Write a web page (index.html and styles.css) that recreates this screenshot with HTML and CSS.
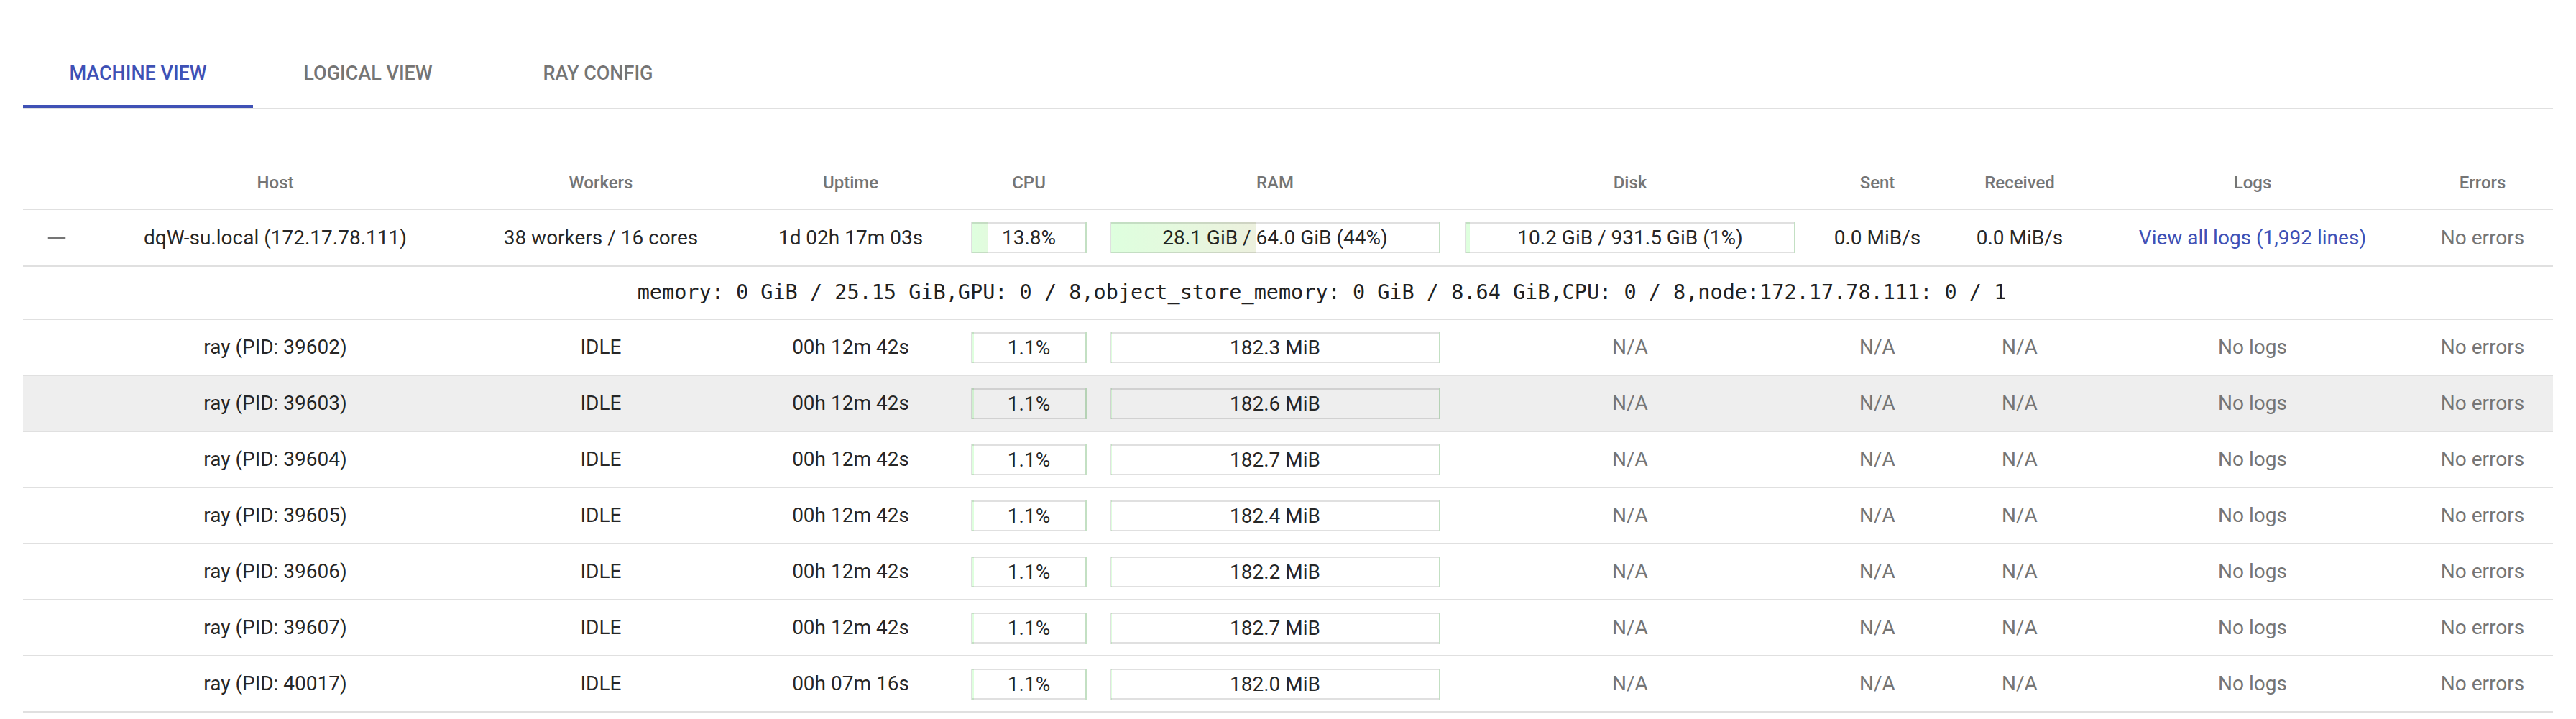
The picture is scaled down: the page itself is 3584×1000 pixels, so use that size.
FILE: index.html
```
<!DOCTYPE html>
<html>
<head>
<meta charset="utf-8">
<link rel="stylesheet" href="styles.css">
</head>
<body>
<div class="page">
  <div class="tabs">
    <div class="tab active">Machine view</div>
    <div class="tab">Logical view</div>
    <div class="tab">Ray config</div>
  </div>

  <div class="table">
    <div class="row head">
      <div class="cell"></div>
      <div class="cell">Host</div>
      <div class="cell">Workers</div>
      <div class="cell">Uptime</div>
      <div class="cell">CPU</div>
      <div class="cell">RAM</div>
      <div class="cell">Disk</div>
      <div class="cell">Sent</div>
      <div class="cell">Received</div>
      <div class="cell">Logs</div>
      <div class="cell">Errors</div>
    </div>

    <div class="row node">
      <div class="cell"><svg class="collapse" viewBox="0 0 24 24"><path d="M19 13H5v-2h14v2z"/></svg></div>
      <div class="cell">dqW-su.local (172.17.78.111)</div>
      <div class="cell">38 workers / 16 cores</div>
      <div class="cell">1d 02h 17m 03s</div>
      <div class="cell"><div class="bar cpu" style="background: linear-gradient(to right, rgba(0,255,0,0.13) 0%, rgba(35,220,0,0.13) 13.8%, transparent 13.8%)">13.8%</div></div>
      <div class="cell"><div class="bar wide" style="background: linear-gradient(to right, rgba(0,255,0,0.13) 0%, rgba(112,143,0,0.13) 44%, transparent 44%)">28.1 GiB / 64.0 GiB (44%)</div></div>
      <div class="cell"><div class="bar wide" style="background: linear-gradient(to right, rgba(0,255,0,0.13) 0%, rgba(3,252,0,0.13) 1%, transparent 1%)">10.2 GiB / 931.5 GiB (1%)</div></div>
      <div class="cell">0.0 MiB/s</div>
      <div class="cell">0.0 MiB/s</div>
      <div class="cell"><span class="link">View all logs (1,992 lines)</span></div>
      <div class="cell muted">No errors</div>
    </div>

    <div class="row res">
      <div class="cell"></div>
      <div class="cell span">memory: 0 GiB / 25.15 GiB,GPU: 0 / 8,object_store_memory: 0 GiB / 8.64 GiB,CPU: 0 / 8,node:172.17.78.111: 0 / 1</div>
    </div>

    <div class="row worker">
      <div class="cell"></div>
      <div class="cell">ray (PID: 39602)</div>
      <div class="cell">IDLE</div>
      <div class="cell">00h 12m 42s</div>
      <div class="cell"><div class="bar cpu" style="background: linear-gradient(to right, rgba(0,255,0,0.13) 0%, rgba(3,252,0,0.13) 1.1%, transparent 1.1%)">1.1%</div></div>
      <div class="cell"><div class="bar wide" style="background: linear-gradient(to right, rgba(0,255,0,0.13) 0%, rgba(1,254,0,0.13) 0.28%, transparent 0.28%)">182.3 MiB</div></div>
      <div class="cell muted">N/A</div>
      <div class="cell muted">N/A</div>
      <div class="cell muted">N/A</div>
      <div class="cell muted">No logs</div>
      <div class="cell muted">No errors</div>
    </div>

    <div class="row worker hover">
      <div class="cell"></div>
      <div class="cell">ray (PID: 39603)</div>
      <div class="cell">IDLE</div>
      <div class="cell">00h 12m 42s</div>
      <div class="cell"><div class="bar cpu" style="background: linear-gradient(to right, rgba(0,255,0,0.13) 0%, rgba(3,252,0,0.13) 1.1%, transparent 1.1%)">1.1%</div></div>
      <div class="cell"><div class="bar wide" style="background: linear-gradient(to right, rgba(0,255,0,0.13) 0%, rgba(1,254,0,0.13) 0.28%, transparent 0.28%)">182.6 MiB</div></div>
      <div class="cell muted">N/A</div>
      <div class="cell muted">N/A</div>
      <div class="cell muted">N/A</div>
      <div class="cell muted">No logs</div>
      <div class="cell muted">No errors</div>
    </div>

    <div class="row worker">
      <div class="cell"></div>
      <div class="cell">ray (PID: 39604)</div>
      <div class="cell">IDLE</div>
      <div class="cell">00h 12m 42s</div>
      <div class="cell"><div class="bar cpu" style="background: linear-gradient(to right, rgba(0,255,0,0.13) 0%, rgba(3,252,0,0.13) 1.1%, transparent 1.1%)">1.1%</div></div>
      <div class="cell"><div class="bar wide" style="background: linear-gradient(to right, rgba(0,255,0,0.13) 0%, rgba(1,254,0,0.13) 0.28%, transparent 0.28%)">182.7 MiB</div></div>
      <div class="cell muted">N/A</div>
      <div class="cell muted">N/A</div>
      <div class="cell muted">N/A</div>
      <div class="cell muted">No logs</div>
      <div class="cell muted">No errors</div>
    </div>

    <div class="row worker">
      <div class="cell"></div>
      <div class="cell">ray (PID: 39605)</div>
      <div class="cell">IDLE</div>
      <div class="cell">00h 12m 42s</div>
      <div class="cell"><div class="bar cpu" style="background: linear-gradient(to right, rgba(0,255,0,0.13) 0%, rgba(3,252,0,0.13) 1.1%, transparent 1.1%)">1.1%</div></div>
      <div class="cell"><div class="bar wide" style="background: linear-gradient(to right, rgba(0,255,0,0.13) 0%, rgba(1,254,0,0.13) 0.28%, transparent 0.28%)">182.4 MiB</div></div>
      <div class="cell muted">N/A</div>
      <div class="cell muted">N/A</div>
      <div class="cell muted">N/A</div>
      <div class="cell muted">No logs</div>
      <div class="cell muted">No errors</div>
    </div>

    <div class="row worker">
      <div class="cell"></div>
      <div class="cell">ray (PID: 39606)</div>
      <div class="cell">IDLE</div>
      <div class="cell">00h 12m 42s</div>
      <div class="cell"><div class="bar cpu" style="background: linear-gradient(to right, rgba(0,255,0,0.13) 0%, rgba(3,252,0,0.13) 1.1%, transparent 1.1%)">1.1%</div></div>
      <div class="cell"><div class="bar wide" style="background: linear-gradient(to right, rgba(0,255,0,0.13) 0%, rgba(1,254,0,0.13) 0.28%, transparent 0.28%)">182.2 MiB</div></div>
      <div class="cell muted">N/A</div>
      <div class="cell muted">N/A</div>
      <div class="cell muted">N/A</div>
      <div class="cell muted">No logs</div>
      <div class="cell muted">No errors</div>
    </div>

    <div class="row worker">
      <div class="cell"></div>
      <div class="cell">ray (PID: 39607)</div>
      <div class="cell">IDLE</div>
      <div class="cell">00h 12m 42s</div>
      <div class="cell"><div class="bar cpu" style="background: linear-gradient(to right, rgba(0,255,0,0.13) 0%, rgba(3,252,0,0.13) 1.1%, transparent 1.1%)">1.1%</div></div>
      <div class="cell"><div class="bar wide" style="background: linear-gradient(to right, rgba(0,255,0,0.13) 0%, rgba(1,254,0,0.13) 0.28%, transparent 0.28%)">182.7 MiB</div></div>
      <div class="cell muted">N/A</div>
      <div class="cell muted">N/A</div>
      <div class="cell muted">N/A</div>
      <div class="cell muted">No logs</div>
      <div class="cell muted">No errors</div>
    </div>

    <div class="row worker">
      <div class="cell"></div>
      <div class="cell">ray (PID: 40017)</div>
      <div class="cell">IDLE</div>
      <div class="cell">00h 07m 16s</div>
      <div class="cell"><div class="bar cpu" style="background: linear-gradient(to right, rgba(0,255,0,0.13) 0%, rgba(3,252,0,0.13) 1.1%, transparent 1.1%)">1.1%</div></div>
      <div class="cell"><div class="bar wide" style="background: linear-gradient(to right, rgba(0,255,0,0.13) 0%, rgba(1,254,0,0.13) 0.28%, transparent 0.28%)">182.0 MiB</div></div>
      <div class="cell muted">N/A</div>
      <div class="cell muted">N/A</div>
      <div class="cell muted">N/A</div>
      <div class="cell muted">No logs</div>
      <div class="cell muted">No errors</div>
    </div>
  </div>
</div>
</body>
</html>
```

FILE: styles.css
```
html, body {
  margin: 0;
  padding: 0;
  background: #ffffff;
}

body {
  font-family: Roboto, "Liberation Sans", sans-serif;
  color: rgba(0, 0, 0, 0.87);
  font-size: 28px;
  line-height: 40px;
}

.page {
  padding: 54px 32px 0 32px;
}

/* Tabs */
.tabs {
  display: flex;
  height: 96px;
  border-bottom: 2px solid #e0e0e0;
}

.tab {
  width: 320px;
  height: 96px;
  display: flex;
  align-items: center;
  justify-content: center;
  font-size: 27px;
  font-weight: 500;
  letter-spacing: 0;
  text-transform: uppercase;
  color: #757575;
}

.tab.active {
  color: #3f51b5;
  box-shadow: inset 0 -4px 0 #3f51b5;
}

/* Table */
.table {
  margin-top: 66px;
}

.row {
  display: grid;
  grid-template-columns: 94px 514px 392px 303px 193px 492px 496px 192px 204px 444px 196px;
  align-items: center;
  border-bottom: 2px solid #e0e0e0;
}

.cell {
  text-align: center;
  white-space: nowrap;
}

.head {
  height: 72px;
}

.head .cell {
  font-size: 24px;
  font-weight: 500;
  line-height: 48px;
  color: #757575;
}

.node {
  height: 77px;
}

.res {
  height: 72px;
}

.worker {
  height: 76px;
}

.hover {
  background: #eeeeee;
}

.span {
  grid-column: 2 / -1;
  font-family: "DejaVu Sans Mono", "Liberation Mono", monospace;
  font-size: 28.5px;
  color: #212121;
}

.muted {
  color: #757575;
}

.link {
  color: #3f51b5;
}

.collapse {
  width: 42px;
  height: 42px;
  display: block;
  margin: 0 auto;
  fill: #757575;
}

.bar {
  margin: 0 auto;
  height: 39px;
  line-height: 39px;
  border: 2px solid rgba(0, 0, 0, 0.12);
  box-sizing: content-box;
}

.bar.cpu {
  width: 157px;
}

.bar.wide {
  width: 456px;
}
```
